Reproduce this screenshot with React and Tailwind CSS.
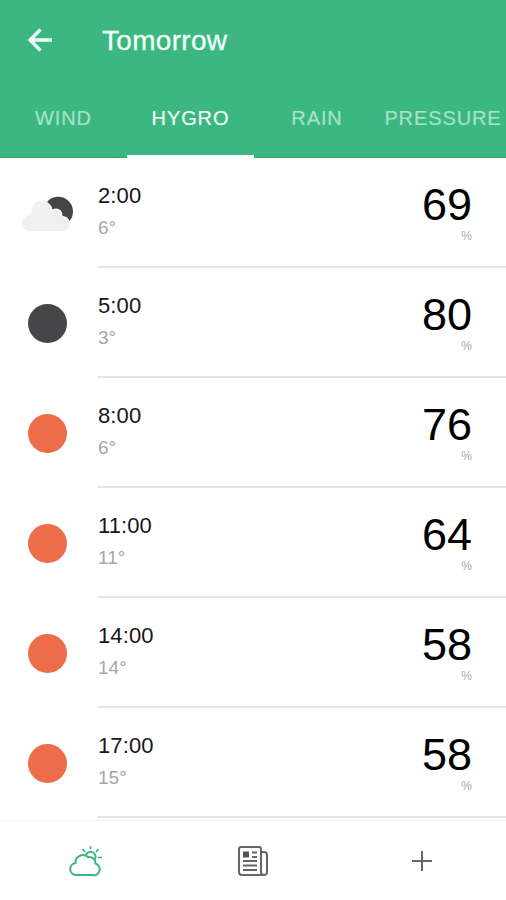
const tabs = [
  { name: 'WIND', className: 'w-[127px] text-[#a5e3c6]' },
  { name: 'HYGRO', className: 'w-[127px] text-[#effff7] border-b-[3px] border-white' },
  { name: 'RAIN', className: 'w-[126px] text-[#a5e3c6]' },
  { name: 'PRESSURE', className: 'w-[126px] text-[#a5e3c6]' },
];

const hours = [
  { time: '2:00', temp: '6°', value: 69, icon: 'cloudy' },
  { time: '5:00', temp: '3°', value: 80, icon: 'night' },
  { time: '8:00', temp: '6°', value: 76, icon: 'sun' },
  { time: '11:00', temp: '11°', value: 64, icon: 'sun' },
  { time: '14:00', temp: '14°', value: 58, icon: 'sun' },
  { time: '17:00', temp: '15°', value: 58, icon: 'sun' },
];

function CloudyNight() {
  return (
    <svg width="54" height="38" viewBox="0 0 54 38">
      <path
        d="M27 8 A13.400 13.400 0 1 1 49.500 27 Q48 22.500 42.500 22 Q42.500 17 39.500 15.500 Q36 13.500 32.500 15.500 Q31.500 10.500 27 8 Z"
        fill="#454547"
      />
      <path
        d="M9.500 37 A7.500 7.500 0 0 1 2 30 C2 25 6 21 11 20.500 C12 11.500 15.500 6.500 21.500 6.500 C27 6.500 31 11 32 16 C37 14 41.500 18 42 22.500 C46 23 49 27 49.500 31 C50 35 47 37 43 37 Z"
        fill="#f0f0f0"
      />
    </svg>
  );
}

function WeatherIcon({ icon }) {
  if (icon === 'cloudy') {
    return <CloudyNight />;
  }
  return (
    <div
      className={
        icon === 'night'
          ? 'size-[39px] rounded-full bg-[#464648]'
          : 'size-[39px] rounded-full bg-[#ed6c4a]'
      }
    />
  );
}

function HourRow({ hour }) {
  return (
    <div className="flex h-[110px] shrink-0">
      <div className="flex w-[97px] items-center justify-center pr-[3px]">
        <WeatherIcon icon={hour.icon} />
      </div>
      <div className="flex grow justify-between border-b-2 border-[#e6e6e6] pr-[34px]">
        <div className="pt-6 pl-px">
          <p className="text-[22px] leading-7 tracking-[0.1px] text-[#161616]">{hour.time}</p>
          <p className="mt-1.5 text-[19px] leading-6 text-[#a6a6a6]">{hour.temp}</p>
        </div>
        <div className="pt-[22px] text-right">
          <p className="text-[45px] leading-[50px] text-black">{hour.value}</p>
          <p className="text-[12px] leading-3 text-[#a8a8a8]">%</p>
        </div>
      </div>
    </div>
  );
}

function App() {
  return (
    <div className="flex h-[900px] w-[506px] flex-col overflow-hidden bg-white font-['Liberation_Sans',sans-serif]">
      {/* Header */}
      <header className="h-[158px] shrink-0 bg-[#3cb782]">
        <div className="flex h-20 items-center pl-[27px]">
          <svg width="26" height="24" viewBox="0 0 26 24" fill="none" stroke="#effff7" strokeWidth="3.400">
            <path d="M13.500 1.500 L3 12 L13.500 22.500 M2.500 12 H25" />
          </svg>
          <h1 className="ml-[49px] pt-px text-[28px] leading-8 tracking-[0.3px] text-[#effff7] [-webkit-text-stroke:0.3px]">
            Tomorrow
          </h1>
        </div>
        <nav className="flex h-[78px] border-b border-[#24ab72]">
          {tabs.map((tab) => (
            <div
              key={tab.name}
              className={`flex h-[78px] shrink-0 justify-center pt-[26px] text-[20px] leading-6 tracking-[0.9px] [-webkit-text-stroke:0.2px] ${tab.className}`}
            >
              {tab.name}
            </div>
          ))}
        </nav>
      </header>

      {/* Hourly list */}
      <main className="flex h-[662px] shrink-0 flex-col">
        {hours.map((hour) => (
          <HourRow key={hour.time} hour={hour} />
        ))}
      </main>

      {/* Bottom bar */}
      <footer className="flex h-20 shrink-0 items-center border-t border-[#f5f5f5]">
        <div className="flex w-[169px] justify-center">
          <svg width="36" height="32" viewBox="0 0 36 32" fill="none" stroke="#3cb782" strokeWidth="2">
            <path d="M8 30 H25 A6 6 0 0 0 28.500 18.500 C28.500 14 25 11.500 21 12 C15 7.500 8 12 8.500 18 A6.100 6.100 0 0 0 8 30 Z" />
            <path d="M18.800 10.500 A5 5 0 1 1 27.500 15" />
            <path d="M23.500 1 V4 M15.500 4 L18 7 M31.500 4 L29 7 M31 12.500 H35" strokeWidth="1.700" />
          </svg>
        </div>
        <div className="flex w-[168px] justify-center">
          <svg width="32" height="32" viewBox="0 0 32 32" fill="none" stroke="#666" strokeWidth="2">
            <path d="M26 30 H5 Q2 30 2 27 V4 Q2 2 4 2 H22 Q24 2 24 4 V27 Q24 30 27 30 Q30 30 30 27 V10 Q30 7 27 7 H24" />
            <path d="M6 6.500 H12 V12.500 H6 Z" fill="#555" stroke="none" />
            <path d="M15 7.500 H20 M15 12 H20 M6 16 H20 M6 20.500 H20 M6 25 H20" strokeWidth="1.800" />
          </svg>
        </div>
        <div className="flex w-[169px] justify-center">
          <svg width="22" height="22" viewBox="0 0 22 22" fill="none" stroke="#666" strokeWidth="2">
            <path d="M11 1 V21 M1 11 H21" />
          </svg>
        </div>
      </footer>
    </div>
  );
}

export default App;
